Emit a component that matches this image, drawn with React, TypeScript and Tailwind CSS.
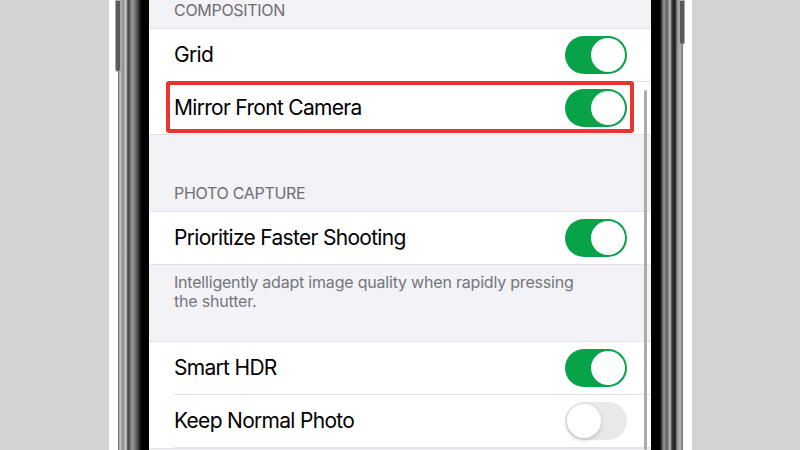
import React from 'react'

/* ─── Toggle ─────────────────────────────────────────────────────────────── */

function Toggle({ on }: { on: boolean }) {
  if (on) {
    return (
      <div className="flex h-[38px] w-[62px] items-center justify-end rounded-full bg-[#08a249] p-[2px]">
        <div className="h-[34px] w-[34px] rounded-full bg-white" />
      </div>
    )
  }
  return (
    <div className="flex h-[38px] w-[62px] items-center rounded-full bg-[#e9e9eb] p-[2px]">
      <div className="h-[34px] w-[34px] rounded-full bg-white shadow-[0_2px_5px_rgba(0,0,0,0.18)]" />
    </div>
  )
}

/* ─── Row ────────────────────────────────────────────────────────────────── */

function Row({
  label,
  on,
  last = false,
  highlight = false,
}: {
  label: string
  on: boolean
  last?: boolean
  highlight?: boolean
}) {
  return (
    <div className="relative bg-white pl-[25px]">
      <div
        className={
          last
            ? 'flex h-[52px] items-center justify-between pr-[24px]'
            : 'flex h-[53px] items-center justify-between border-b border-[#e3e3e6] pr-[24px]'
        }
      >
        <span className="text-[21px] tracking-[-0.7px] text-black">{label}</span>
        <Toggle on={on} />
      </div>
      {highlight && (
        <div className="absolute left-[17px] right-[17px] top-[-1px] bottom-[1px] rounded-[3px] border-[4px] border-[#e8352f]" />
      )}
    </div>
  )
}

/* ─── Page ───────────────────────────────────────────────────────────────── */

export default function App() {
  return (
    <div className="flex h-[450px] w-[800px] overflow-hidden bg-[#d3d3d3] font-['Inter',sans-serif]">
      {/* left backdrop */}
      <div className="w-[109px] bg-[#d3d3d3]" />
      <div className="w-[9px] bg-white" />

      {/* left frame */}
      <div className="relative w-[31px] bg-[linear-gradient(to_right,#5a5a5a_0px,#c8c8c8_2px,#8a8a8a_5px,#d0d0d0_8px,#3a3a3a_10px,#9a9a9a_14px,#6a6a6a_18px,#1a1a1a_22px,#000_24px,#000_31px)]">
        <div className="absolute left-[-3px] top-0 h-[72px] w-[6px] rounded-b-[3px] border border-[#a8a8a8] bg-[#5a5a5a]" />
      </div>

      {/* screen */}
      <div className="relative w-[502px] bg-[#f2f2f7]">
        {/* COMPOSITION */}
        <div className="h-[28px] pl-[25px] text-[16px] leading-[20px] tracking-[-0.3px] text-[#6e6e73]">
          COMPOSITION
        </div>
        <div className="border-y border-[#e3e3e6]">
          <Row label="Grid" on />
          <Row label="Mirror Front Camera" on last highlight />
        </div>

        {/* PHOTO CAPTURE */}
        <div className="flex h-[76px] items-end pb-[8px] pl-[25px] text-[16px] leading-[20px] tracking-[-0.3px] text-[#6e6e73]">
          PHOTO CAPTURE
        </div>
        <div className="border-y border-[#e3e3e6]">
          <Row label="Prioritize Faster Shooting" on last />
        </div>
        <div className="h-[76px] pl-[25px] pr-[64px] pt-[8px] text-[16px] leading-[19px] tracking-[-0.2px] text-[#76767b]">
          Intelligently adapt image quality when rapidly pressing the shutter.
        </div>

        <div className="border-y border-[#e3e3e6]">
          <Row label="Smart HDR" on />
          <Row label="Keep Normal Photo" on={false} />
        </div>

        {/* scroll indicator */}
        <div className="absolute bottom-0 right-[4px] top-[90px] w-[3px] rounded-full bg-[#ababab]" />
      </div>

      {/* right frame */}
      <div className="relative w-[32px] bg-[linear-gradient(to_right,#000_0px,#000_9px,#2a2a2a_10px,#9a9a9a_13px,#5a5a5a_16px,#c0c0c0_19px,#3a3a3a_21px,#1a1a1a_24px,#8a8a8a_26px,#b8b8b8_29px,#6a6a6a_32px)]">
        <div className="absolute right-[-2px] top-0 h-[45px] w-[6px] rounded-b-[3px] border border-[#a8a8a8] bg-[#5a5a5a]" />
      </div>
      <div className="w-[9px] bg-white" />
      <div className="flex-1 bg-[#d3d3d3]" />
    </div>
  )
}
